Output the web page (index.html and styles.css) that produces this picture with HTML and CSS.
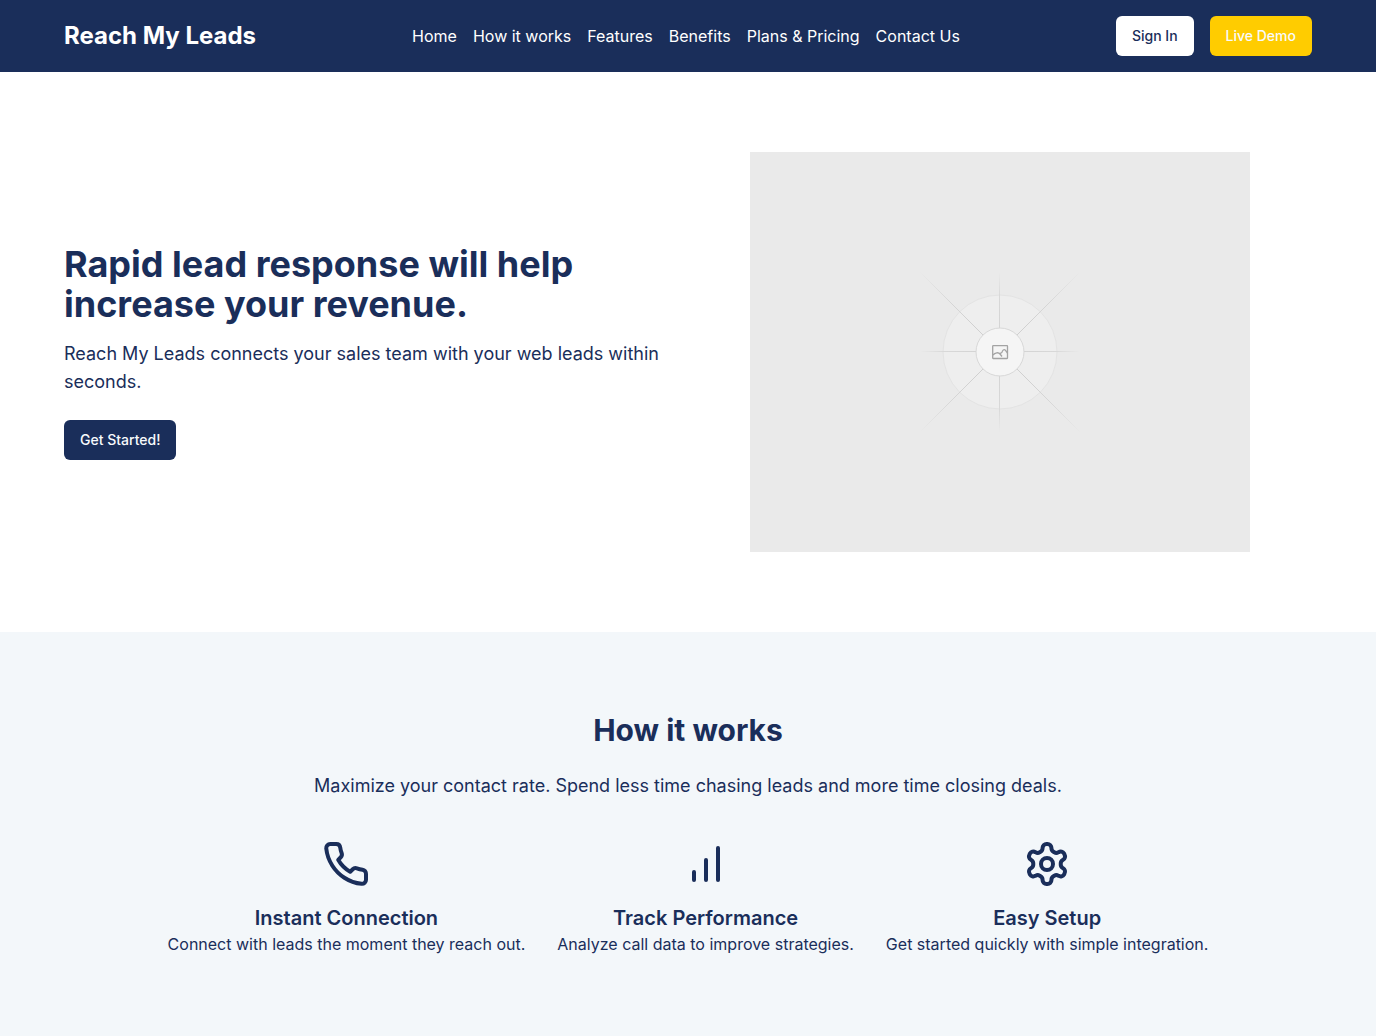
FILE: index.html
```html
<!DOCTYPE html>
<html lang="en">
<head>
<meta charset="utf-8">
<meta name="viewport" content="width=device-width, initial-scale=1">
<title>Reach My Leads</title>
<link rel="stylesheet" href="styles.css">
</head>
<body>
<header class="site-header">
  <a class="brand" href="#">Reach My Leads</a>
  <nav class="nav">
    <a href="#">Home</a>
    <a href="#how">How it works</a>
    <a href="#">Features</a>
    <a href="#">Benefits</a>
    <a href="#">Plans &amp; Pricing</a>
    <a href="#">Contact Us</a>
  </nav>
  <div class="actions">
    <button class="btn btn-light" type="button">Sign In</button>
    <button class="btn btn-accent" type="button">Live Demo</button>
  </div>
</header>
<main>
  <section class="hero">
    <div class="hero-copy">
      <h1>Rapid lead response will help increase your revenue.</h1>
      <p>Reach My Leads connects your sales team with your web leads within seconds.</p>
      <button class="btn btn-primary" type="button">Get Started!</button>
    </div>
    <div class="hero-media">
      <svg class="placeholder" viewBox="0 0 500 400" role="img" aria-label="Image placeholder">
        <defs>
          <radialGradient id="fade" gradientUnits="userSpaceOnUse" cx="250" cy="200" r="114">
            <stop offset="0.3" stop-color="#d0d0d0"/>
            <stop offset="0.6" stop-color="#d6d6d6"/>
            <stop offset="1" stop-color="#eaeaea"/>
          </radialGradient>
          <radialGradient id="fade-axis" gradientUnits="userSpaceOnUse" cx="250" cy="200" r="80">
            <stop offset="0.3" stop-color="#d4d4d4"/>
            <stop offset="0.7" stop-color="#d8d8d8"/>
            <stop offset="1" stop-color="#eaeaea"/>
          </radialGradient>
        </defs>
        <rect width="500" height="400" fill="#eaeaea"/>
        <circle cx="250" cy="200" r="57" fill="#eeeeee" stroke="#e3e3e3"/>
        <path d="M170 199.500H330M249.500 120V280" stroke="url(#fade-axis)"/>
        <path d="M170 120L330 280M330 120L170 280" stroke="url(#fade)"/>
        <circle cx="250" cy="200" r="24" fill="#f5f5f5" stroke="#d8d8d8"/>
        <g fill="none" stroke="#a3a3a3" stroke-width="1.300">
          <rect x="242.700" y="193.700" width="14.800" height="12.800" rx="0.500"/>
          <path d="M243 203C245 200.500 248.500 200 250 202L252 204.500M249.800 201.800C250.500 200.500 252 202 252.500 199C253.500 197.200 255 197.500 255.500 198.500L257.500 201"/>
        </g>
      </svg>
    </div>
  </section>
  <section class="how" id="how">
    <h2>How it works</h2>
    <p class="lead">Maximize your contact rate. Spend less time chasing leads and more time closing deals.</p>
    <div class="features">
      <article class="feature">
        <svg class="icon" viewBox="0 0 24 24" aria-hidden="true"><path d="M22 16.920v3a2 2 0 0 1-2.180 2 19.790 19.790 0 0 1-8.630-3.070 19.500 19.500 0 0 1-6-6 19.790 19.790 0 0 1-3.070-8.670A2 2 0 0 1 4.110 2h3a2 2 0 0 1 2 1.720 12.840 12.840 0 0 0 .7 2.810 2 2 0 0 1-.45 2.110L8.090 9.910a16 16 0 0 0 6 6l1.270-1.270a2 2 0 0 1 2.110-.45 12.840 12.840 0 0 0 2.810.7A2 2 0 0 1 22 16.920z"/></svg>
        <h3>Instant Connection</h3>
        <p>Connect with leads the moment they reach out.</p>
      </article>
      <article class="feature">
        <svg class="icon" viewBox="0 0 24 24" aria-hidden="true"><path d="M12 20V10M18 20V4M6 20v-4"/></svg>
        <h3>Track Performance</h3>
        <p>Analyze call data to improve strategies.</p>
      </article>
      <article class="feature">
        <svg class="icon" viewBox="0 0 24 24" aria-hidden="true"><path d="M12.220 2h-.44a2 2 0 0 0-2 2v.18a2 2 0 0 1-1 1.730l-.43.25a2 2 0 0 1-2 0l-.15-.08a2 2 0 0 0-2.730.73l-.22.38a2 2 0 0 0 .73 2.730l.15.1a2 2 0 0 1 1 1.720v.51a2 2 0 0 1-1 1.740l-.15.09a2 2 0 0 0-.73 2.730l.22.38a2 2 0 0 0 2.730.73l.15-.08a2 2 0 0 1 2 0l.43.25a2 2 0 0 1 1 1.730V20a2 2 0 0 0 2 2h.44a2 2 0 0 0 2-2v-.18a2 2 0 0 1 1-1.730l.43-.25a2 2 0 0 1 2 0l.15.08a2 2 0 0 0 2.730-.73l.22-.39a2 2 0 0 0-.73-2.730l-.15-.08a2 2 0 0 1-1-1.740v-.5a2 2 0 0 1 1-1.740l.15-.09a2 2 0 0 0 .73-2.730l-.22-.38a2 2 0 0 0-2.730-.73l-.15.08a2 2 0 0 1-2 0l-.43-.25a2 2 0 0 1-1-1.730V4a2 2 0 0 0-2-2z"/><circle cx="12" cy="12" r="3"/></svg>
        <h3>Easy Setup</h3>
        <p>Get started quickly with simple integration.</p>
      </article>
    </div>
  </section>
</main>
</body>
</html>
```
FILE: styles.css
```css
* { box-sizing: border-box; margin: 0; }
body { font-family: Inter, sans-serif; font-size: 16px; line-height: 24px; color: #1a2e5a; background: #fff; }
a { color: inherit; text-decoration: none; }
.site-header { display: flex; flex-wrap: wrap; align-items: center; justify-content: space-between; gap: 16px; padding: 16px 64px; background: #1a2e5a; color: #fff; }
.brand { font-size: 24px; line-height: 32px; font-weight: 700; }
.nav { display: flex; flex-wrap: wrap; gap: 16px; }
.actions { display: flex; gap: 16px; }
.btn { height: 40px; padding: 0 16px; border: 0; border-radius: 6px; font: 500 14px/20px Inter, sans-serif; cursor: pointer; }
.btn-light { background: #fff; color: #1a2e5a; }
.btn-accent { background: #ffcc00; color: #f8fafc; }
.btn-primary { background: #1a2e5a; color: #f8fafc; }
.hero { display: grid; grid-template-columns: 1fr 1fr; align-items: center; padding: 80px 64px; }
.hero-copy h1 { font-size: 36px; line-height: 40px; font-weight: 700; margin-bottom: 16px; }
.hero-copy p { font-size: 18px; line-height: 28px; margin-bottom: 24px; }
.hero-media { display: flex; justify-content: center; }
.placeholder { display: block; width: 100%; max-width: 500px; }
.how { padding: 80px 64px; text-align: center; background: #f3f7fa; }
.how h2 { font-size: 30px; line-height: 36px; font-weight: 700; margin-bottom: 24px; }
.lead { font-size: 18px; line-height: 28px; margin-bottom: 40px; }
.features { display: flex; flex-wrap: wrap; justify-content: center; gap: 32px; }
.feature { display: flex; flex-direction: column; align-items: center; }
.icon { width: 48px; height: 48px; margin-bottom: 16px; fill: none; stroke: currentColor; stroke-width: 2; stroke-linecap: round; stroke-linejoin: round; }
.feature h3 { font-size: 20px; line-height: 28px; font-weight: 600; }
```
